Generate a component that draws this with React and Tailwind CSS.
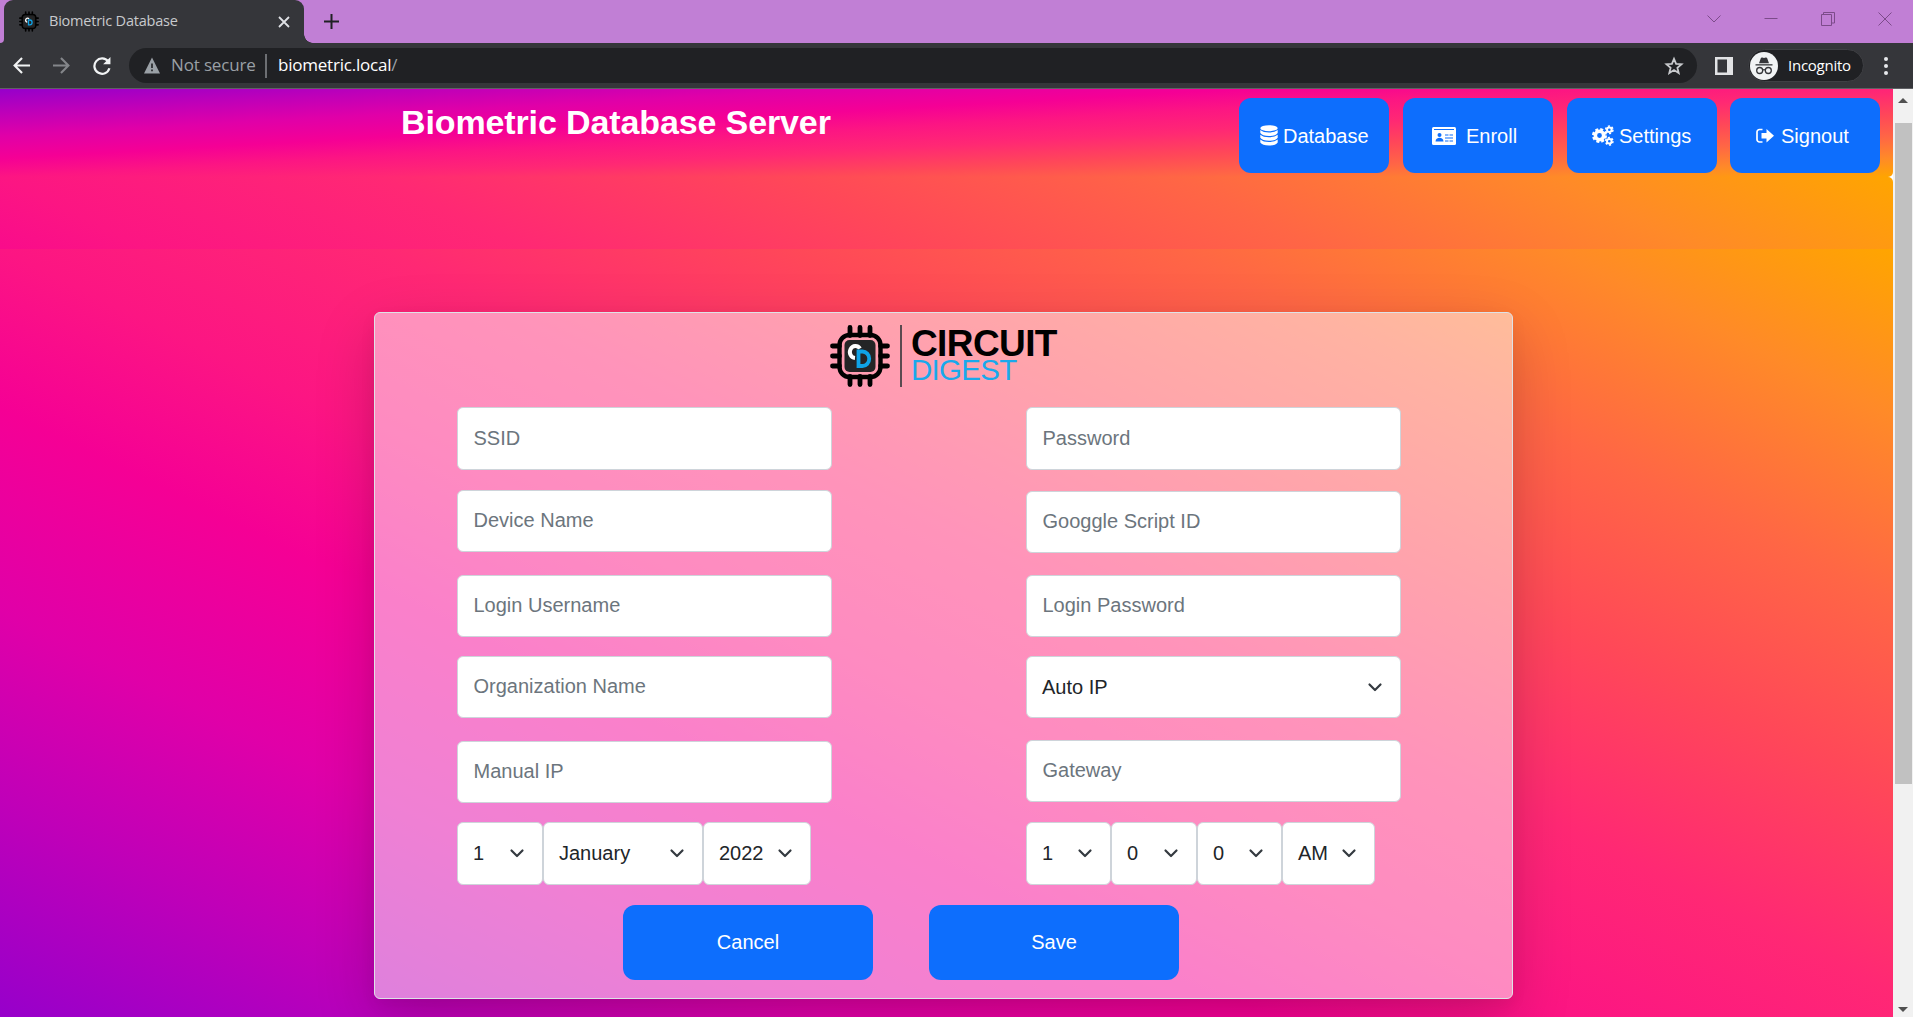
import React from "react";

const field =
  "flex items-center rounded-[6px] border border-[#ced4da] bg-white pl-[15.5px] pb-px text-[20px] placeholder-[#6c757d] text-[#212529] outline-none w-[375px]";

function Chip({ ring = "none", className }) {
  return (
    <svg viewBox="0 0 60 62" className={className}>
      <g stroke="#000" strokeWidth="4.8" strokeLinecap="round">
        <path d="M20 2.5v8M30 2.5v8M40 2.5v8M20 51.5v8M30 51.5v8M40 51.5v8M2.5 21h7M2.5 31h7M2.5 41h7M50.5 21h7M50.5 31h7M50.5 41h7" />
      </g>
      <rect x="9.5" y="10" width="41" height="42" rx="10" fill={ring} stroke="#000" strokeWidth="4.4" />
      <rect x="14.5" y="15" width="31" height="32" rx="5" fill="#242526" />
      <path d="M30 23.500A5.600 6 0 1 0 25 33" fill="none" stroke="#fff" strokeWidth="4" />
      <path d="M28.500 26.500h4a6.500 7 0 0 1 0 14.500h-4z" fill="none" stroke="#0fa3e6" strokeWidth="3.800" />
    </svg>
  );
}

function Chevron({ className }) {
  return (
    <svg viewBox="0 0 16 16" className={className} fill="none" stroke="#343a40" strokeWidth="2.200" strokeLinecap="round" strokeLinejoin="round">
      <path d="m2.500 5.500 5.500 5.500 5.500-5.500" />
    </svg>
  );
}

function Select({ children, className }) {
  return (
    <div className={`flex items-center justify-between rounded-[6px] border border-[#ced4da] bg-white pb-px pl-[15px] pr-[17px] text-[20px] text-[#212529] ${className}`}>
      <span>{children}</span>
      <Chevron className="h-4 w-4 shrink-0" />
    </div>
  );
}

function TitleBar() {
  return (
    <div className="flex h-[43px] bg-[#c17fd5]">
      <div className="flex w-1 items-end bg-[#35363a]">
        <div className="h-full w-full rounded-br-[4px] bg-[#c17fd5]" />
      </div>
      <div className="flex w-[300px] items-center rounded-t-[9px] bg-[#35363a] pl-[15px] pr-[14px]">
        <Chip ring="#222" className="h-[21px] w-5" />
        <span className="ml-[10px] grow pb-0.5 font-['Open_Sans','Noto_Sans',sans-serif] text-[14.5px] tracking-[-0.22px] text-[#c8cacd]">Biometric Database</span>
        <svg viewBox="0 0 12 12" className="h-3 w-3" stroke="#dfe1e5" strokeWidth="1.800"><path d="m1 1 10 10M11 1 1 11" /></svg>
      </div>
      <div className="flex w-[9px] items-end">
        <div className="h-[9px] w-[9px] bg-[radial-gradient(circle_at_100%_0,#c17fd5_8.5px,#35363a_9px)]" />
      </div>
      <svg viewBox="0 0 15 15" className="ml-[11px] mt-[14px] h-[15px] w-[15px]" stroke="#202124" strokeWidth="2"><path d="M7.500 0v15M0 7.500h15" /></svg>
      <div className="ml-auto mr-[21px] mt-3 flex h-[14px] items-center gap-[43px] text-[#7c4b8a]">
        <svg viewBox="0 0 14 14" className="h-[14px] w-[14px]" fill="none" stroke="currentColor"><path d="m.5 3.500 6.500 6.500 6.500-6.500" /></svg>
        <svg viewBox="0 0 14 14" className="h-[14px] w-[14px]" fill="none" stroke="currentColor"><path d="M.5 6.500h13" /></svg>
        <svg viewBox="0 0 14 14" className="h-[14px] w-[14px]" fill="none" stroke="currentColor"><path d="M.5 2.500h10v11H.5zM2.500 2.500v-2h11v10.500h-2.500" /></svg>
        <svg viewBox="0 0 14 14" className="h-[14px] w-[14px]" fill="none" stroke="currentColor"><path d="m.5.5 13 13M13.500.5l-13 13" /></svg>
      </div>
    </div>
  );
}

function Toolbar() {
  return (
    <div className="flex h-[46px] items-center border-b border-[#5f6064] bg-[#35363a] font-['Open_Sans','Noto_Sans',sans-serif]">
      <svg viewBox="0 0 16 16" className="ml-[13px] h-[17px] w-[17px]" fill="none" stroke="#f1f3f4" strokeWidth="2"><path d="M16 8H1.500M8.500 1 1.500 8l7 7" /></svg>
      <svg viewBox="0 0 16 16" className="ml-[23px] h-[17px] w-[17px]" fill="none" stroke="#84868a" strokeWidth="2"><path d="M0 8h14.500M7.500 1l7 7-7 7" /></svg>
      <svg viewBox="0 0 16 16" className="ml-[23px] h-[18px] w-[18px]" fill="none" stroke="#f1f3f4" strokeWidth="2"><path d="M13.500 4A6.800 6.800 0 1 0 14.600 10" /><path d="M15.500 0v6.500H9z" fill="#f1f3f4" stroke="none" /></svg>
      <div className="ml-[18px] flex h-[35px] w-[1568px] items-center rounded-full bg-[#202124] pl-[15px] pr-[13px]">
        <svg viewBox="0 0 16 16" className="h-[17px] w-4"><path d="M8 0l8 16H0z" fill="#9aa0a6" /><path d="M8 6v4.500M8 12v1.700" stroke="#202124" strokeWidth="1.600" /></svg>
        <span className="ml-[11px] w-[85px] whitespace-nowrap pb-px text-[17px] tracking-[-0.15px] text-[#9aa0a6]">Not secure</span>
        <div className="ml-[9px] h-6 w-[2px] bg-[#6d6f73]" />
        <span className="ml-[11px] grow pb-px text-[17px] tracking-[-0.22px] text-white">biometric.local<span className="text-[#9aa0a6]">/</span></span>
        <svg viewBox="0 0 20 20" className="h-5 w-5" fill="none" stroke="#c8cacd" strokeWidth="1.800"><path d="m10 2.800 2.100 5 5.400.4-4.100 3.500 1.300 5.300-4.700-2.900-4.700 2.900 1.300-5.300L2.500 8.200l5.400-.4z" /></svg>
      </div>
      <svg viewBox="0 0 18 18" className="ml-[18px] h-[18px] w-[18px]"><path d="M0 0h18v18H0z" fill="#e2e3e5" /><path d="M2.500 2.500h9.500v13H2.500z" fill="#35363a" /></svg>
      <div className="ml-[15px] flex h-[33px] w-[116px] items-center rounded-full border border-[#3f4044] bg-[#202124] pl-px">
        <svg viewBox="0 0 28 28" className="h-7 w-7"><circle cx="14" cy="14" r="14" fill="#f1f3f4" /><g fill="#35363a"><path d="M9 11.200 10.800 6.200c.3-.8 1-.9 1.600-.6 1 .5 2.200.5 3.200 0 .6-.3 1.300-.2 1.600.6l1.800 5z" /><path d="M5.500 12.200h17v1.300h-17z" /></g><g fill="none" stroke="#35363a" strokeWidth="1.300"><circle cx="9.700" cy="18.500" r="3" /><circle cx="18.300" cy="18.500" r="3" /><path d="M12.700 18q1.300-.9 2.600 0" /></g></svg>
        <span className="ml-[10px] pb-px text-[15px] tracking-[-0.25px] text-white">Incognito</span>
      </div>
      <div className="ml-5 flex flex-col gap-[3px]">
        <div className="h-1 w-1 rounded-full bg-[#e8eaed]" />
        <div className="h-1 w-1 rounded-full bg-[#e8eaed]" />
        <div className="h-1 w-1 rounded-full bg-[#e8eaed]" />
      </div>
    </div>
  );
}

function DatabaseIcon() {
  return (
    <svg viewBox="0 0 18 21" className="h-[21px] w-[18px] shrink-0" fill="#fff">
      <ellipse cx="9" cy="3.200" rx="8.700" ry="3" />
      <path d="M.3 5q3 2.500 8.700 2.500T17.700 5v3q-2 3-8.700 3T.3 8z" />
      <path d="M.3 9.800q3 2.500 8.700 2.500t8.700-2.500v3q-2 3-8.700 3t-8.700-3z" />
      <path d="M.3 14.600q3 2.500 8.700 2.500t8.700-2.500v3q-2 3-8.700 3t-8.700-3z" />
    </svg>
  );
}

function CogsIcon() {
  return (
    <svg viewBox="0 0 22 21" className="h-[21px] w-[22px] shrink-0" fill="none" stroke="#fff">
      <circle cx="7.500" cy="10.500" r="4.200" strokeWidth="3.600" />
      <circle cx="7.500" cy="10.500" r="6.300" strokeWidth="2.400" strokeDasharray="2.900 2.048" />
      <circle cx="17.300" cy="4.800" r="2.300" strokeWidth="2" />
      <circle cx="17.300" cy="4.800" r="3.700" strokeWidth="1.500" strokeDasharray="2.100 1.775" />
      <circle cx="17.300" cy="16.200" r="2.300" strokeWidth="2" />
      <circle cx="17.300" cy="16.200" r="3.700" strokeWidth="1.500" strokeDasharray="2.100 1.775" />
    </svg>
  );
}

const navButton = "flex h-[75px] w-[150px] items-center rounded-[12px] bg-[#0d6efd] text-[20px] text-white";

function Header() {
  return (
    <header className="flex h-[88px] items-start justify-between rounded-br-[5px] bg-[linear-gradient(to_bottom_right,#8400d4,#9800ca_9%,#c000b8_20.4%,#e000a8_30.5%,#f50095_41.4%,#fc1583_50%,#ff2874_60%,#ff4858_71%,#ff6645_81%,#ff8a28_91%,#ffa500)] bg-[length:100%_106px] bg-bottom pl-[401px] pr-[13px]">
      <h1 className="mt-[13px] text-[34px] font-bold leading-[40px] tracking-[-0.12px] text-white">Biometric Database Server</h1>
      <nav className="mt-[9px] flex gap-[14px]">
        <button className={`${navButton} gap-[5px] pl-[21px]`}><DatabaseIcon />Database</button>
        <button className={`${navButton} gap-[10px] pl-[29px]`}>
          <svg viewBox="0 0 24 18" className="h-[18px] w-6"><rect width="24" height="18" rx="1.500" fill="#fff" /><path d="M2 2.500h20M13 8h3.500M17.500 8H21M13 11h8M13 14h3.500M17.500 14H21" stroke="#0d6efd" strokeWidth="1.200" /><circle cx="7.500" cy="8" r="2" fill="#0d6efd" /><path d="M3.500 14.500c0-5 8-5 8 0z" fill="#0d6efd" /></svg>
          Enroll
        </button>
        <button className={`${navButton} gap-[5px] pl-[25px]`}><CogsIcon />Settings</button>
        <button className={`${navButton} -ml-px gap-[7px] pl-[26px]`}>
          <svg viewBox="0 0 18 16" className="h-4 w-[18px]"><path d="M6.500 1.500H3.500a2.500 2.500 0 0 0-2.500 2.500v7.500A2.500 2.500 0 0 0 3.500 14h3" fill="none" stroke="#fff" strokeWidth="1.700" /><path d="M5.500 5h5V1l7.500 6.700-7.500 6.700v-4h-5z" fill="#fff" /></svg>
          Signout
        </button>
      </nav>
    </header>
  );
}

function Logo() {
  return (
    <div className="ml-[455px] mt-3 flex h-[62px]">
      <Chip className="h-[62px] w-[60px]" />
      <div className="ml-[10px] h-full w-[2px] bg-[#5a4a50]" />
      <div className="ml-[9px] mt-[3px] text-black">
        <div className="h-[30px] text-[37px] font-bold leading-[31px] tracking-[-0.6px]">CIRCUIT</div>
        <div className="h-[27px] text-[29.5px] leading-[23px] tracking-[-0.7px] text-[#19a9ec]">DIGEST</div>
      </div>
    </div>
  );
}

function SettingsForm() {
  return (
    <div className="ml-[374px] mt-[63px] h-[687px] w-[1139px] rounded-[6px] border border-[#dee2e6] bg-white/50 shadow-[0_20px_60px_rgba(0,0,0,0.175),0_6px_16px_rgba(0,0,0,0.06)]">
      <Logo />
      <div className="ml-[82px] mt-5 flex gap-[194px]">
        <div className="flex flex-col">
          <input className={`${field} h-[63px]`} placeholder="SSID" />
          <input className={`${field} mt-5 h-[62px]`} placeholder="Device Name" />
          <input className={`${field} mt-[23px] h-[62px]`} placeholder="Login Username" />
          <input className={`${field} mt-[19px] h-[62px]`} placeholder="Organization Name" />
          <input className={`${field} mt-[23px] h-[62px]`} placeholder="Manual IP" />
          <div className="mt-[19px] flex h-[63px]">
            <Select className="w-[86px]">1</Select>
            <Select className="w-[160px]">January</Select>
            <Select className="w-[108px]">2022</Select>
          </div>
        </div>
        <div className="flex flex-col">
          <input className={`${field} h-[63px]`} placeholder="Password" />
          <input className={`${field} mt-[21px] h-[62px]`} placeholder="Googgle Script ID" />
          <input className={`${field} mt-[22px] h-[62px]`} placeholder="Login Password" />
          <Select className="mt-[19px] h-[62px] w-[375px]">Auto IP</Select>
          <input className={`${field} mt-[22px] h-[62px]`} placeholder="Gateway" />
          <div className="mt-[20px] flex h-[63px]">
            <Select className="w-[85px]">1</Select>
            <Select className="w-[86px]">0</Select>
            <Select className="w-[85px]">0</Select>
            <Select className="w-[93px]">AM</Select>
          </div>
        </div>
      </div>
      <div className="ml-[248px] mt-5 flex gap-[56px] text-[20px] text-white">
        <button className="h-[75px] w-[250px] rounded-[12px] bg-[#0d6efd] pb-0.5">Cancel</button>
        <button className="h-[75px] w-[250px] rounded-[12px] bg-[#0d6efd] pb-0.5">Save</button>
      </div>
    </div>
  );
}

const sunset =
  "bg-[linear-gradient(to_top_right,#8400d4,#9800ca_9%,#c000b8_20.4%,#e000a8_30.5%,#f50095_41.4%,#fc1583_50%,#ff2874_60%,#ff4858_71%,#ff6645_81%,#ff8a28_91%,#ffa500)] bg-[length:100%_928px] bg-no-repeat";

export default function App() {
  return (
    <div className="flex h-[1017px] w-[1913px] flex-col overflow-hidden bg-white font-['Liberation_Sans',Arial,sans-serif]">
      <TitleBar />
      <Toolbar />
      <div className="flex grow">
        <main className="w-[1893px]">
          <Header />
          <div className={`h-[72px] rounded-tr-[5px] ${sunset}`} />
          <div className={`flow-root h-[768px] ${sunset}`}>
            <SettingsForm />
          </div>
        </main>
        <aside className="flex w-5 flex-col items-center justify-between bg-[#f1f1f1]">
          <div className="flex flex-col items-center">
            <svg viewBox="0 0 10 5" className="mt-[9px] h-[5px] w-[10px]"><path d="M5 0l5 5H0z" fill="#505050" /></svg>
            <div className="mt-5 h-[661px] w-[17px] bg-[#c1c1c1]" />
          </div>
          <svg viewBox="0 0 10 5" className="mb-[5px] h-[5px] w-[10px]"><path d="M0 0h10L5 5z" fill="#505050" /></svg>
        </aside>
      </div>
    </div>
  );
}
